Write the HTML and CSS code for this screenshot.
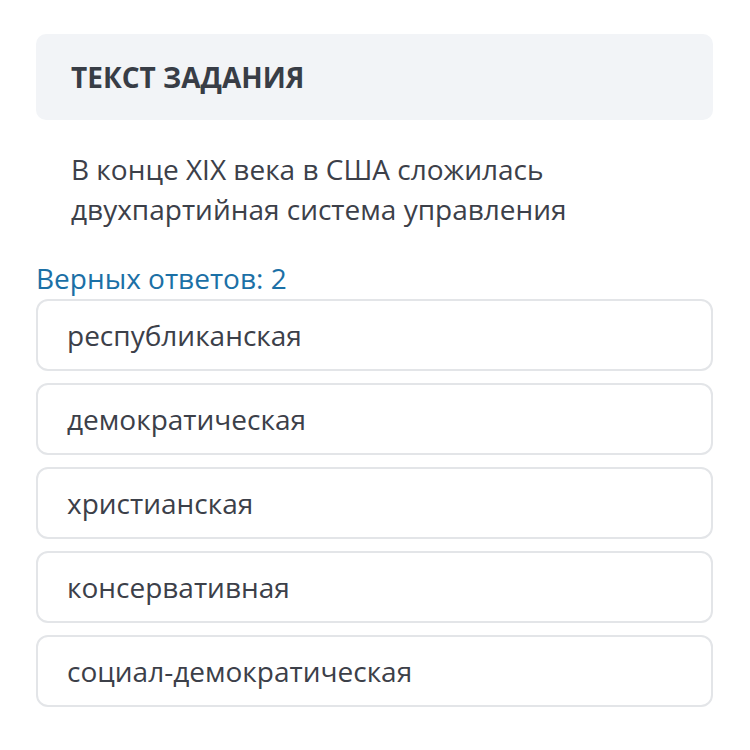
FILE: index.html
```html
<!DOCTYPE html>
<html lang="ru">
<head>
<meta charset="utf-8">
<link rel="stylesheet" href="styles.css">
</head>
<body>
<div class="page">
  <div class="header">ТЕКСТ ЗАДАНИЯ</div>
  <div class="question">В конце XIX века в США сложилась двухпартийная система управления</div>
  <div class="count">Верных ответов: 2</div>
  <div class="options">
    <div class="option">республиканская</div>
    <div class="option">демократическая</div>
    <div class="option">христианская</div>
    <div class="option">консервативная</div>
    <div class="option">социал-демократическая</div>
  </div>
</div>
</body>
</html>
```

FILE: styles.css
```css
html, body {
  margin: 0;
  padding: 0;
  background: #ffffff;
}
body {
  font-family: "Open Sans", "Noto Sans", sans-serif;
  color: #3c4049;
}
.page {
  width: 677px;
  margin-left: 36px;
  padding-top: 34px;
}
.header {
  height: 86px;
  box-sizing: border-box;
  background: #f2f4f7;
  border-radius: 10px;
  padding-left: 35px;
  display: flex;
  align-items: center;
  font-size: 28px;
  font-weight: 700;
  color: #383d46;
}
.question {
  padding: 29px 120px 0 35px;
  font-size: 28px;
  line-height: 40px;
}
.count {
  margin-top: 28px;
  font-size: 28px;
  line-height: 42px;
  color: #1b70a6;
}
.options {
  display: flex;
  flex-direction: column;
  gap: 12px;
}
.option {
  height: 72px;
  box-sizing: border-box;
  border: 2px solid #e3e5e8;
  border-radius: 12px;
  padding-left: 29px;
  display: flex;
  align-items: center;
  font-size: 28px;
  color: #3c4049;
}
```
